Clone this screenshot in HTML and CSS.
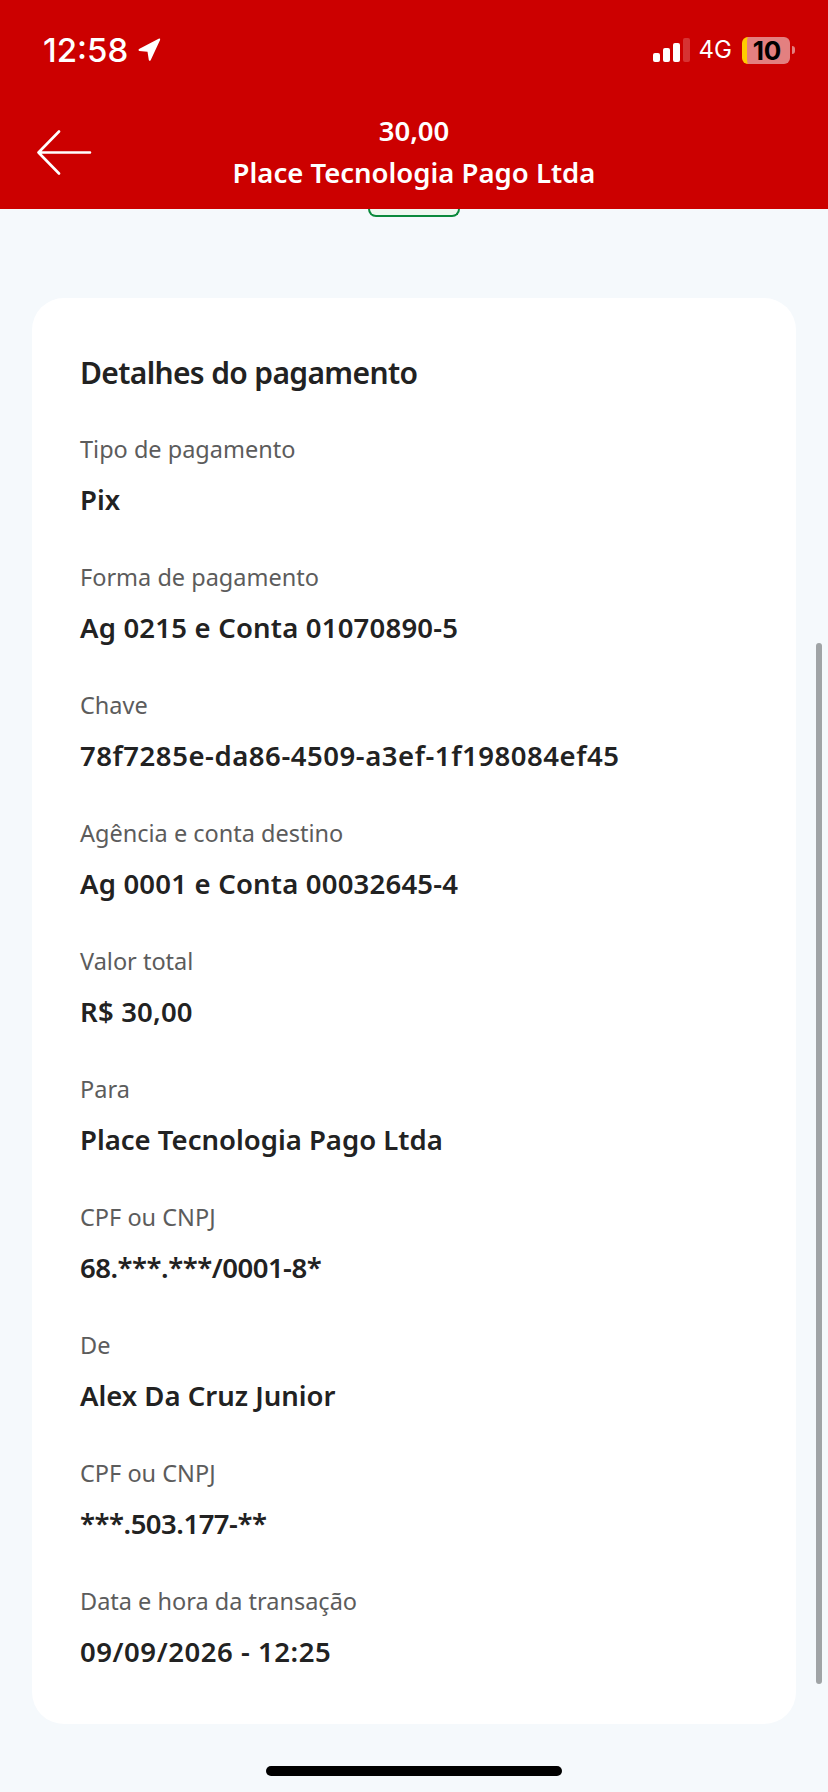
FILE: index.html
```html
<!DOCTYPE html>
<html lang="pt-BR">
<head>
    <meta charset="UTF-8">
    <meta name="viewport" content="width=device-width, initial-scale=1.0">
    <title>Detalhes do pagamento</title>
    <link rel="stylesheet" href="styles.css">
</head>
<body>

<header class="header">
    <div class="status-bar">
        <div class="status-left">
            <span class="time">12:58</span>
            <svg class="location-icon" width="24" height="24" viewBox="0 0 26 26">
                <path d="M25 2.2 L14.8 24 Q13.6 25.6 12.8 23.8 L11.4 15 L2.4 14 Q0.6 13 2.2 11.8 L23.4 0.8 Q25.6 0.2 25 2.2 Z" fill="#fff"/>
            </svg>
        </div>
        <div class="status-right">
            <svg class="signal-icon" width="37" height="24" viewBox="0 0 37 24">
                <rect x="0" y="15" width="7" height="9" rx="2" fill="#fff"/>
                <rect x="10" y="10" width="7" height="14" rx="2" fill="#fff"/>
                <rect x="20" y="5" width="7" height="19" rx="2" fill="#fff"/>
                <rect x="30" y="0" width="7" height="24" rx="2" fill="#fff" fill-opacity="0.2"/>
            </svg>
            <span class="network">4G</span>
            <div class="battery">
                <span class="battery-level">10</span>
            </div>
            <span class="battery-cap"></span>
        </div>
    </div>
    <div class="nav-bar">
        <svg class="back-icon" width="56" height="45" viewBox="0 0 56 45">
            <path d="M22 1.500 L1.500 22.500 L22 43.500 M1.500 22.500 H53" fill="none" stroke="#fff" stroke-width="2.600" stroke-linecap="round" stroke-linejoin="round"/>
        </svg>
        <div class="nav-title">
            <div>30,00</div>
            <div>Place Tecnologia Pago Ltda</div>
        </div>
    </div>
</header>

<main class="content">
    <div class="status-pill"></div>

    <section class="card">
        <h2 class="card-title">Detalhes do pagamento</h2>

        <div class="detail">
            <div class="detail-label">Tipo de pagamento</div>
            <div class="detail-value">Pix</div>
        </div>
        <div class="detail">
            <div class="detail-label">Forma de pagamento</div>
            <div class="detail-value account">Ag 0215 e Conta 01070890-5</div>
        </div>
        <div class="detail">
            <div class="detail-label">Chave</div>
            <div class="detail-value digits">78f7285e-da86-4509-a3ef-1f198084ef45</div>
        </div>
        <div class="detail">
            <div class="detail-label">Agência e conta destino</div>
            <div class="detail-value account">Ag 0001 e Conta 00032645-4</div>
        </div>
        <div class="detail">
            <div class="detail-label">Valor total</div>
            <div class="detail-value account">R$ 30,00</div>
        </div>
        <div class="detail">
            <div class="detail-label">Para</div>
            <div class="detail-value">Place Tecnologia Pago Ltda</div>
        </div>
        <div class="detail">
            <div class="detail-label">CPF ou CNPJ</div>
            <div class="detail-value masked">68.***.***/0001-8*</div>
        </div>
        <div class="detail">
            <div class="detail-label">De</div>
            <div class="detail-value">Alex Da Cruz Junior</div>
        </div>
        <div class="detail">
            <div class="detail-label">CPF ou CNPJ</div>
            <div class="detail-value masked">***.503.177-**</div>
        </div>
        <div class="detail">
            <div class="detail-label">Data e hora da transação</div>
            <div class="detail-value digits">09/09/2026 - 12:25</div>
        </div>
    </section>
</main>

<div class="scrollbar"></div>
<div class="home-indicator"></div>

</body>
</html>
```

FILE: styles.css
```css
* {
    box-sizing: border-box;
}

html, body {
    height: 100%;
}

body {
    margin: 0;
    height: 1792px;
    overflow: hidden;
    position: relative;
    font-family: "Noto Sans", "Open Sans", sans-serif;
    background-color: #f5f9fc;
    color: #222;
}

.header {
    height: 209px;
    background-color: #cc0000;
    color: #fff;
}

.status-bar {
    height: 100px;
    padding: 34px 33px 0 43px;
    display: flex;
    justify-content: space-between;
    align-items: flex-start;
}

.status-left {
    display: flex;
    align-items: center;
    gap: 9px;
}

.time {
    font-family: Inter, sans-serif;
    font-size: 33px;
    font-weight: 500;
    line-height: 32px;
}

.status-right {
    display: flex;
    align-items: center;
    padding-top: 2px;
}

.signal-icon {
    margin-right: 9px;
}

.network {
    font-family: Inter, sans-serif;
    font-size: 24px;
    line-height: 28px;
    margin-right: 10px;
}

.battery {
    width: 48px;
    height: 27px;
    padding-right: 3px;
    border-radius: 6px;
    border-left: 5px solid #ffcc00;
    background-color: #e38080;
    display: flex;
    align-items: center;
    justify-content: center;
}

.battery-level {
    font-family: Inter, sans-serif;
    font-size: 26px;
    font-weight: 700;
    line-height: 27px;
    color: #000;
}

.battery-cap {
    width: 3px;
    height: 8px;
    margin-left: 2px;
    border-radius: 0 4px 4px 0;
    background-color: #e38080;
}

.nav-bar {
    position: relative;
    height: 109px;
}

.back-icon {
    position: absolute;
    left: 37px;
    top: 30px;
}

.nav-title {
    padding-top: 10px;
    text-align: center;
    font-size: 27.500px;
    font-weight: 600;
    line-height: 42px;
}

.content {
    padding: 0 32px;
}

.status-pill {
    width: 92px;
    height: 8px;
    margin: 0 auto 81px;
    background-color: #eef8f0;
    border: 2px solid #0a8a3c;
    border-top: none;
    border-radius: 0 0 14px 14px;
}

.card {
    height: 1426px;
    padding: 50px 48px 0;
    background-color: #fff;
    border-radius: 32px;
}

.card-title {
    margin: 0 0 31px;
    font-size: 30px;
    font-weight: 600;
    line-height: 50px;
    letter-spacing: -0.650px;
    color: #222;
}

.detail {
    height: 128px;
}

.detail-label {
    font-size: 23.500px;
    line-height: 40px;
    margin-bottom: 11px;
    color: #5c5c5c;
}

.detail-value {
    font-size: 27.500px;
    font-weight: 600;
    line-height: 40px;
    color: #222;
}

.detail-value.account {
    letter-spacing: 0.200px;
}

.detail-value.digits {
    letter-spacing: 0.550px;
}

.detail-value.masked {
    letter-spacing: -0.500px;
}

.scrollbar {
    position: absolute;
    left: 816px;
    top: 643px;
    width: 6px;
    height: 1041px;
    border-radius: 3px;
    background-color: #a0a4a6;
}

.home-indicator {
    position: absolute;
    left: 266px;
    top: 1766px;
    width: 296px;
    height: 10px;
    border-radius: 5px;
    background-color: #000;
}
```
